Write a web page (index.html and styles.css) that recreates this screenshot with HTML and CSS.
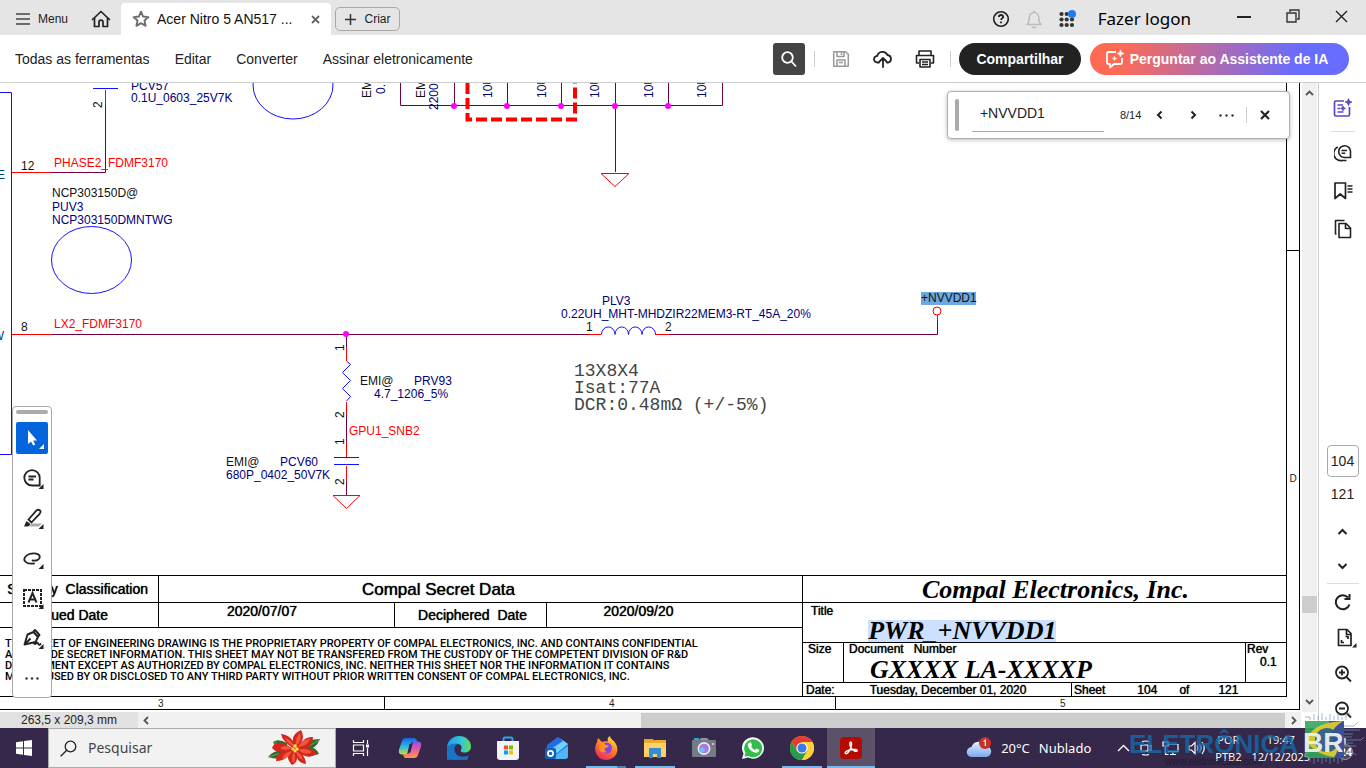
FILE: index.html
```html
<!DOCTYPE html>
<html lang="pt-BR">
<head>
<meta charset="utf-8">
<meta name="viewport" content="width=device-width, initial-scale=1">
<title>Acer Nitro 5 AN517</title>
<link rel="stylesheet" href="styles.css">
</head>
<body>
<header class="titlebar">
  <button class="menu-btn"><svg width="14" height="12" viewBox="0 0 14 12"><path d="M0 1h14M0 6h14M0 11h14" stroke="#444" stroke-width="1.6"/></svg>Menu</button>
  <button class="home-btn" aria-label="Início"><svg width="20" height="18" viewBox="0 0 20 18" fill="none" stroke="#222" stroke-width="1.7" stroke-linejoin="round" stroke-linecap="round"><path d="M1.500 9.500 10 1.500l8.500 8"/><path d="M3.500 8v8.500H8V12q0-1.800 2-1.800t2 1.800v4.500h4.500V8"/></svg></button>
  <div class="tab">
    <svg width="18" height="18" viewBox="0 0 16 16" fill="none" stroke="#6e6e6e" stroke-width="1.700" stroke-linejoin="round"><path d="m8 1.500 1.900 4.300 4.700.5-3.500 3.100 1 4.700L8 11.700l-4.100 2.400 1-4.700L1.400 6.300l4.700-.5z"/></svg>
    <span class="tab-name">Acer Nitro 5 AN517 ...</span>
    <button class="tab-close" aria-label="Fechar guia"><svg width="9" height="9" viewBox="0 0 9 9"><path d="m1 1 7 7M8 1 1 8" stroke="#666" stroke-width="1.8"/></svg></button>
  </div>
  <button class="create-btn"><svg width="11" height="11" viewBox="0 0 11 11"><path d="M5.500 0v11M0 5.500h11" stroke="#333" stroke-width="1.500"/></svg>Criar</button>
  <div class="title-right">
    <button aria-label="Ajuda"><svg width="18" height="18" viewBox="0 0 18 18" fill="none" stroke="#222"><circle cx="9" cy="9" r="7.300" stroke-width="1.600"/><path d="M6.800 7q.2-2 2.200-2t2.200 1.800c0 1.500-2.100 1.600-2.100 3.200M9 11.500v1.800" stroke-width="1.800"/></svg></button>
    <button aria-label="Notificações"><svg width="18" height="20" viewBox="0 0 18 20" fill="none" stroke="#bbb" stroke-width="1.500" stroke-linejoin="round"><path d="M2 15.500c1.800-1.500 2.200-3.200 2.200-6.500 0-3 1.800-5.500 4.800-5.500s4.800 2.500 4.800 5.500c0 3.300.4 5 2.200 6.500zM9 3V1.500M7 17.500c.5 1.500 3.500 1.500 4 0"/></svg></button>
    <button aria-label="Aplicativos"><svg width="18" height="18" viewBox="0 0 18 18" fill="#333"><circle cx="3.500" cy="4" r="2.100"/><circle cx="8.700" cy="4" r="2.100"/><circle cx="3.500" cy="9.500" r="2.100"/><circle cx="8.700" cy="9.500" r="2.100"/><circle cx="14" cy="9.500" r="2.100"/><circle cx="3.500" cy="15" r="2.100"/><circle cx="8.700" cy="15" r="2.100"/><circle cx="14" cy="15" r="2.100"/><circle cx="14" cy="4" r="4" fill="#1c7df0"/></svg></button>
  </div>
  <button class="login">Fazer logon</button>
  <div class="window-controls">
    <button aria-label="Minimizar"><svg width="16" height="16" viewBox="0 0 16 16"><path d="M1 9h14" stroke="#222" stroke-width="2"/></svg></button>
    <button aria-label="Restaurar"><svg width="14" height="14" viewBox="0 0 14 14" fill="none" stroke="#333" stroke-width="1.400"><path d="M1 4h9v9H1zM4 3V1h9v9h-2"/></svg></button>
    <button aria-label="Fechar"><svg width="13" height="13" viewBox="0 0 13 13"><path d="m1 1 11 11M12 1 1 12" stroke="#222" stroke-width="1.400"/></svg></button>
  </div>
</header>

<nav class="toolbar">
  <div class="tool-menus">
    <button>Todas as ferramentas</button><button>Editar</button><button>Converter</button><button>Assinar eletronicamente</button>
  </div>
  <button class="find-btn" aria-label="Localizar"><svg width="18" height="18" viewBox="0 0 18 18" fill="none" stroke="#fff" stroke-width="1.800"><circle cx="7.500" cy="7.500" r="5.300"/><path d="m11.500 11.500 4.500 5"/></svg></button>
  <i class="divider"></i>
  <div class="tool-icons">
    <button aria-label="Salvar"><svg width="18" height="18" viewBox="0 0 18 18" fill="none" stroke="#999" stroke-width="1.500" stroke-linejoin="round"><path d="M1.700 1.700h12l2.600 2.600v12H1.700zM5 2v4.500h7V2M9.500 2v3M5 16v-6h8v6M7 12.500h4"/></svg></button>
    <button aria-label="Enviar"><svg width="20" height="18" viewBox="0 0 20 18" fill="none" stroke="#222" stroke-width="1.800" stroke-linecap="round" stroke-linejoin="round"><path d="M6 12.500H4.500a3.300 3.300 0 0 1-.3-6.600A5.500 5.500 0 0 1 14.500 5a3.900 3.900 0 0 1 1 7.500H14M10 17V8.500M6.500 11.500 10 8l3.500 3.500"/></svg></button>
    <button aria-label="Imprimir"><svg width="20" height="18" viewBox="0 0 20 18" fill="none" stroke="#222" stroke-width="1.600" stroke-linejoin="round"><path d="M4 5V1h12v4M4 13H1.500V5.500h17V13H16M5 9.500h10V17H5zM7 12h6M7 14.500h6"/></svg></button>
  </div>
  <i class="divider"></i>
  <button class="share-btn">Compartilhar</button>
  <button class="ai-btn"><svg width="20" height="20" viewBox="0 0 20 20" fill="none" stroke="#fff" stroke-width="1.800" stroke-linejoin="round"><path d="M11 3H3.500Q2 3 2 4.500v9Q2 15 3.500 15H5v3.500L9 15h6.500q1.500 0 1.500-1.500V9"/><path d="m15.500 1 .9 2.500L19 4.500l-2.600 1-.9 2.500-1-2.500-2.500-1 2.500-1zM9.500 7.500l.6 1.400 1.400.6-1.400.6-.6 1.400-.6-1.400-1.400-.6 1.400-.6z" fill="#fff" stroke-width=".6"/></svg>Perguntar ao Assistente de IA</button>
</nav>

<main class="workspace">
  <div class="viewer">
    <div class="viewport">
      <section class="document">
        <div class="sheet">
          <svg class="schematic" role="img" aria-label="Esquema elétrico">
            <g transform="translate(0 -83)">
              <g class="blue">
                <path d="M0 92.500h11.500v362H0M93 88.500h25M334 457.500h25M334 464.500h25"/>
                <ellipse cx="91.500" cy="260" rx="40" ry="33.500"/>
                <ellipse cx="293" cy="85" rx="40" ry="34"/>
                <path d="m346.500 361 4 3.500-8 8 8 8-8 8 8 8-4 4.500M601.500 334.500a6.700 7.500 0 0 1 13.500 0a6.700 7.500 0 0 1 13.500 0a6.700 7.500 0 0 1 13.500 0a6.700 7.500 0 0 1 13.500 0"/>
              </g>
              <path class="wire" d="M52 172.500h53.500V106M400.500 83v22.500h322V83M454.500 83v22M507.500 83v22M561.500 83v22M615.500 83v89M668.500 83v22M52 334.500h536M669 334.500h268.500V320M346.500 334v13M346.500 415v26M346.500 482v13"/>
              <path class="pin" d="M12 172.500h40M105.500 90v16M12 334.500h40M588 334.500h13M655 334.500h14M937.500 315v5M346.500 347v14M346.500 402v13M346.500 441v16M346.500 466v16M601 173.500h28l-14 13zM333 495.500h27l-13.500 13z"/>
              <circle class="pin" cx="937" cy="311" r="4"/>
              <path class="zone" d="M467.500 83v36.500h107.500V83"/>
              <g fill="#f0f"><circle cx="454" cy="106" r="3"/><circle cx="507" cy="106" r="3"/><circle cx="561" cy="106" r="3"/><circle cx="615" cy="106" r="3"/><circle cx="668" cy="106" r="3"/><circle cx="346" cy="334" r="3"/></g>
              <rect x="921" y="292" width="55" height="13" fill="#70a8dc"/>
              <g class="label part">
                <text x="131" y="90">PCV57</text><text x="131" y="102">0.1U_0603_25V7K</text>
                <text x="52" y="211">PUV3</text><text x="52" y="224">NCP303150DMNTWG</text>
                <text x="602" y="305">PLV3</text><text x="561" y="318">0.22UH_MHT-MHDZIR22MEM3-RT_45A_20%</text>
                <text x="414" y="385">PRV93</text><text x="374" y="398">4.7_1206_5%</text>
                <text x="280" y="466">PCV60</text><text x="226" y="479">680P_0402_50V7K</text>
                <text transform="translate(385 94) rotate(-90)">0.</text>
                <text transform="translate(438 110) rotate(-90)">2200</text>
                <text transform="translate(492 98) rotate(-90)">10U</text>
                <text transform="translate(546 98) rotate(-90)">10U</text>
                <text transform="translate(599 98) rotate(-90)">10U</text>
                <text transform="translate(653 98) rotate(-90)">10U</text>
                <text transform="translate(706 98) rotate(-90)">10U</text>
              </g>
              <g class="label">
                <text x="21" y="170">12</text><text x="21" y="331">8</text>
                <text x="52" y="197">NCP303150D@</text>
                <text x="586" y="331">1</text><text x="665" y="331">2</text>
                <text x="921" y="302">+NVVDD1</text>
                <text x="360" y="385">EMI@</text><text x="226" y="466">EMI@</text>
                <text transform="translate(371 98) rotate(-90)">EM</text>
                <text transform="translate(425 98) rotate(-90)">EM</text>
                <text transform="translate(102 108) rotate(-90)">2</text>
                <text transform="translate(344 351) rotate(-90)">1</text>
                <text transform="translate(344 418) rotate(-90)">2</text>
                <text transform="translate(344 445) rotate(-90)">1</text>
                <text transform="translate(344 485) rotate(-90)">2</text>
              </g>
              <g class="label net">
                <text x="54" y="167">PHASE2_FDMF3170</text><text x="54" y="328">LX2_FDMF3170</text><text x="349" y="435">GPU1_SNB2</text>
              </g>
              <g class="label port" text-anchor="end"><text x="5" y="179">E</text><text x="4" y="340">W</text></g>
              <g class="note"><text x="574" y="376">13X8X4</text><text x="574" y="393">Isat:77A</text><text x="574" y="410">DCR:0.48mΩ (+/-5%)</text></g>
            </g>
          </svg>

          <div class="title-block">
            <div class="tb-left">
              <div class="tb-row tb-head"><span class="c-label c-first">Security&nbsp; Classification</span><span class="c-secret">Compal Secret Data</span></div>
              <div class="tb-row tb-dates"><span class="c-label c-issued">Issued Date</span><span class="c-date1">2020/07/07</span><span class="c-dec">Deciphered&nbsp; Date</span><span class="c-date2">2020/09/20</span></div>
              <p class="legal">THIS SHEET OF ENGINEERING DRAWING IS THE PROPRIETARY PROPERTY OF COMPAL ELECTRONICS, INC. AND CONTAINS CONFIDENTIAL<br>AND TRADE SECRET INFORMATION. THIS SHEET MAY NOT BE TRANSFERED FROM THE CUSTODY OF THE COMPETENT DIVISION OF R&amp;D<br>DEPARTMENT EXCEPT AS AUTHORIZED BY COMPAL ELECTRONICS, INC. NEITHER THIS SHEET NOR THE INFORMATION IT CONTAINS<br>MAY BE USED BY OR DISCLOSED TO ANY THIRD PARTY WITHOUT PRIOR WRITTEN CONSENT OF COMPAL ELECTRONICS, INC.</p>
            </div>
            <div class="tb-right">
              <div class="company">Compal Electronics, Inc.</div>
              <div class="doc-title"><span>Title</span><mark>PWR_+NVVDD1</mark></div>
              <div class="doc-ids">
                <span class="c-size">Size</span>
                <div class="c-number"><span>Document&nbsp;&nbsp; Number</span><b>GXXXX LA-XXXXP</b></div>
                <div class="c-rev"><span>Rev</span><span>0.1</span></div>
              </div>
              <div class="doc-date"><span>Date:</span><span>Tuesday, December 01, 2020</span><div class="c-sheet"><span>Sheet</span><span>104</span><span>of</span><span>121</span></div></div>
            </div>
          </div>
        </div>
        <div class="sheet-margin"><span>D</span></div>
        <div class="ruler"><span>3</span><span>4</span><span>5</span></div>
      </section>
      <div class="v-scroll">
        <svg width="9" height="6" viewBox="0 0 9 6"><path d="m1 5 3.500-3.500L8 5" fill="none" stroke="#555" stroke-width="1.800"/></svg>
        <i></i>
        <svg width="9" height="6" viewBox="0 0 9 6"><path d="m1 1 3.500 3.500L8 1" fill="none" stroke="#555" stroke-width="1.800"/></svg>
      </div>
    </div>
    <div class="status">
      <span class="page-size">263,5 x 209,3 mm</span>
      <div class="h-scroll">
        <svg width="6" height="9" viewBox="0 0 6 9"><path d="M5 1 1.500 4.500 5 8" fill="none" stroke="#555" stroke-width="1.800"/></svg>
        <i></i>
        <svg width="6" height="9" viewBox="0 0 6 9"><path d="m1 1 3.500 3.500L1 8" fill="none" stroke="#555" stroke-width="1.800"/></svg>
      </div>
    </div>

    <form class="find-box">
      <i class="grip"></i>
      <input type="text" value="+NVVDD1" aria-label="Localizar texto">
      <output>8/14</output>
      <button type="button" aria-label="Anterior"><svg width="7" height="10" viewBox="0 0 7 10"><path d="M5.500 1.500 2 5l3.500 3.500" fill="none" stroke="#222" stroke-width="2"/></svg></button>
      <button type="button" aria-label="Próximo"><svg width="7" height="10" viewBox="0 0 7 10"><path d="M1.500 1.500 5 5 1.500 8.500" fill="none" stroke="#222" stroke-width="2"/></svg></button>
      <button type="button" aria-label="Mais opções"><svg width="15" height="3" viewBox="0 0 15 3" fill="#333"><circle cx="1.500" cy="1.500" r="1.200"/><circle cx="7.500" cy="1.500" r="1.200"/><circle cx="13.500" cy="1.500" r="1.200"/></svg></button>
      <i class="divider"></i>
      <button type="button" aria-label="Fechar"><svg width="10" height="10" viewBox="0 0 10 10"><path d="m1 1 8 8M9 1 1 9" stroke="#222" stroke-width="2.200"/></svg></button>
    </form>

    <div class="palette">
      <i></i>
      <button class="active" aria-label="Selecionar"><svg viewBox="0 0 32 32"><path d="M12 8v14l3-2.500 2.200 4 2-1-2-4H21z" fill="#fff"/><path d="M28 22v5h-5z" fill="#fff"/></svg></button>
      <button aria-label="Comentar"><svg viewBox="0 0 32 32"><path d="M23.700 23.500H16a7.700 7.700 0 1 1 7.700-7.700zM12.500 14.500h7.500M12.500 17.500h5" fill="none" stroke="#222" stroke-width="1.800"/><path d="M27.500 22v5h-5z" fill="#222"/></svg></button>
      <button aria-label="Realçar"><svg viewBox="0 0 32 32"><path d="M16 21.500h10l-3 3H13z" fill="#aaa"/><path d="m12.500 17.500 8-9q1.800-1.500 3.300-.2t-.2 3.500l-8.200 8.700z" fill="#fff" stroke="#222" stroke-width="1.800"/><path d="m10.500 19 4 3q-1 3-6.500 2.500z" fill="#222"/><path d="M27.500 22v5h-5z" fill="#222"/></svg></button>
      <button aria-label="Desenhar"><svg viewBox="0 0 32 32"><path d="M16.500 18.500c3.500.7 7-.5 7.300-3.300.3-3.700-6-4.700-10.300-3.200s-6.500 5-4.300 7.500c1.800 2 5.300 2.500 8.800 2" fill="none" stroke="#222" stroke-width="1.800" stroke-linecap="round"/><path d="M27.500 22v5h-5z" fill="#222"/></svg></button>
      <button aria-label="Adicionar texto"><svg viewBox="0 0 32 32"><path d="M8 8h17v16H8z" fill="none" stroke="#222" stroke-width="2" stroke-dasharray="3 1"/><path d="m12.500 20.500 4-9.500 4 9.500M14 17.500h5" fill="none" stroke="#222" stroke-width="2"/><path d="M27.500 22v5h-5z" fill="#222"/></svg></button>
      <button aria-label="Assinar"><svg viewBox="0 0 32 32"><path d="m8.500 22.500 3-10 6-2.500 4.500 5-2.500 5zM9 22l5.500-5.500M17 10l2-2 4.500 5-1.800 2M18 21c1.500 3 3-2 4 .5s2 1 3 0" fill="none" stroke="#222" stroke-width="1.900" stroke-linejoin="round"/><path d="M27.500 22v5h-5z" fill="#222"/></svg></button>
      <button aria-label="Mais ferramentas"><svg viewBox="0 0 32 32" fill="#333"><circle cx="10.500" cy="16.500" r="1.200"/><circle cx="16" cy="16.500" r="1.200"/><circle cx="21.500" cy="16.500" r="1.200"/></svg></button>
    </div>
  </div>

  <aside class="rail">
    <div class="rail-top">
      <button aria-label="Assistente de IA"><svg width="20" height="20" viewBox="0 0 20 20" fill="none" stroke="#5a47c8" stroke-width="1.700"><path d="M11 3H3q-1.500 0-1.500 1.500v12Q1.500 18 3 18h12q1.500 0 1.500-1.500V9M4.500 7H10M4.500 10.500H7M4.500 14h6"/><path d="m15.500.5 1 2.600 2.500 1-2.500 1-1 2.600-1-2.600-2.500-1 2.500-1zM10 8l.8 1.600 1.700.8-1.700.8L10 12.800l-.8-1.600-1.700-.8 1.700-.8z" fill="#5a47c8" stroke-width=".8"/></svg></button>
      <hr>
      <button aria-label="Comentários"><svg width="18" height="18" viewBox="0 0 18 18" fill="none" stroke="#222" stroke-width="1.600"><path d="M16.500 13.500h-6a5.900 5.900 0 1 1 6-6zM7.500 6.500H13M7.500 9.200h3.800M3.800 3A7.200 7.200 0 0 0 8.500 16.500h4"/></svg></button>
      <button aria-label="Marcadores"><svg width="20" height="20" viewBox="0 0 20 20" fill="none" stroke="#222" stroke-width="1.700" stroke-linejoin="round"><path d="M2 2h10.500v15.500L7.200 13 2 17.500zM14.500 5h5M14.500 8h5M14.500 11h5"/></svg></button>
      <button aria-label="Páginas"><svg width="18" height="20" viewBox="0 0 18 20" fill="none" stroke="#222" stroke-width="1.600" stroke-linejoin="round"><path d="M5 4.500h7l4.500 4.500v9.500H5zM11.500 5v4.500h5M2.500 15H1.500V1.500h9"/></svg></button>
    </div>
    <div class="rail-bottom">
      <input type="text" value="104" aria-label="Página atual">
      <span class="total">121</span>
      <button class="step" aria-label="Página anterior"><svg width="11" height="8" viewBox="0 0 11 8"><path d="m1.500 6 4-4 4 4" fill="none" stroke="#222" stroke-width="2"/></svg></button>
      <button class="step" aria-label="Próxima página"><svg width="11" height="8" viewBox="0 0 11 8"><path d="m1.500 2 4 4 4-4" fill="none" stroke="#222" stroke-width="2"/></svg></button>
      <hr>
      <button aria-label="Girar"><svg width="18" height="18" viewBox="0 0 18 18" fill="none" stroke="#222" stroke-width="2"><path d="M15.500 11.500A7 7 0 1 1 14 4.500M15.500 1v5h-5"/></svg></button>
      <button class="fit" aria-label="Ajustar página"><svg width="24" height="20" viewBox="0 0 24 20" fill="none" stroke="#222" stroke-width="1.700" stroke-linejoin="round"><path d="M5.500 1.500H14l4 4v12H5.500zM13.500 2v4.500H18M12.500 8.500H15V11M11 14.500H8.500V12"/><path d="M23.500 15v4.500H19z" fill="#222" stroke="none"/></svg></button>
      <button aria-label="Ampliar"><svg width="18" height="18" viewBox="0 0 18 18" fill="none" stroke="#222" stroke-width="1.800"><circle cx="8" cy="7.500" r="6"/><path d="m12.500 12 4.500 4.500M8 4.500v6M5 7.500h6"/></svg></button>
      <button aria-label="Reduzir"><svg width="18" height="18" viewBox="0 0 18 18" fill="none" stroke="#222" stroke-width="1.800"><circle cx="8" cy="7.500" r="6"/><path d="m12.500 12 4.500 4.500M5 7.500h6"/></svg></button>
    </div>
  </aside>
</main>

<footer class="taskbar">
  <button class="start" aria-label="Iniciar"><svg width="16" height="16" viewBox="0 0 16 16" fill="#fff"><path d="M0 2.200 7 1.200v6.300H0zM8 1l8-1v7.500H8zM0 8.500h7v6.300l-7-1zM8 8.500h8V16l-8-1.100z"/></svg></button>
  <label class="search"><svg width="17" height="17" viewBox="0 0 17 17" fill="none" stroke="#222" stroke-width="1.300"><circle cx="10.500" cy="6.500" r="5.300"/><path d="m6.700 10.300-6 6"/></svg>
    <input type="text" placeholder="Pesquisar" aria-label="Pesquisar">
    <svg width="54" height="36" viewBox="0 0 54 36">
      <path d="M22 21Q8 18 1 27q10 4 20-3zM20 13Q11 8 6 12q3 8 15 8zM34 20q14 2 19-11-13 0-20 8zM37 21q6 6 15 3-3-8-13-7z" fill="#356a31"/>
      <path d="M21 23Q10 23 2 27M34 19q10-3 18-9M20 16q-8-1-13-4" fill="none" stroke="#80a861" stroke-width=".8"/>
      <path d="M27 19Q15 11 14 4q8 1 12 7Q25 4 34 0q4 7 0 13 5-7 12-6 0 8-7 11 8 0 11 6-8 5-14 1 3 5 3 9-7-1-9-6 0 5-5 7-5-5-4-9-4 5-12 5 0-7 7-10-7 2-11-3 3-8 12-4z" fill="#d3261d"/>
      <path d="M27 17q-7-4-9-9 7 2 9 9zM29 16q-1-9 4-13 3 7-4 13zM31 17q5-8 12-8-2 7-12 8zM31 20q8-3 14 2-6 4-14-2zM29 21q6 3 7 9-6-2-7-9zM27 22q2 6 0 11-4-4 0-11zM25 21q-3 7-10 8 2-7 10-8zM25 18q-7-4-12 0 5 4 12 0z" fill="#f2563b"/>
      <g fill="#ffe24a"><circle cx="28" cy="16" r="1.800"/><circle cx="26" cy="19" r="1.600"/><circle cx="30" cy="19" r="1.800"/><circle cx="28" cy="21" r="1.500"/></g>
    </svg>
  </label>
  <div class="apps">
    <button aria-label="Visão de tarefas"><svg width="18" height="16" viewBox="0 0 18 16" fill="none" stroke="#fff" stroke-width="1.200"><path d="M1.500 0v2.500h10V0M1.500 5h10v6h-10zM1.500 16v-2.500h10V16M15.500 0v4M15.500 8v8"/><path d="M14 4.500h3v3h-3z" fill="#fff" stroke="none"/></svg></button>
    <button aria-label="Copilot"><svg width="24" height="24" viewBox="0 0 24 24"><defs><linearGradient id="cpA" x2="0" y2="1"><stop stop-color="#1b63e8"/><stop offset=".5" stop-color="#27b6e4"/><stop offset="1" stop-color="#c5df3a"/></linearGradient><linearGradient id="cpB" x2="0" y2="1"><stop stop-color="#8653e6"/><stop offset=".5" stop-color="#ea5aa0"/><stop offset="1" stop-color="#ff9a45"/></linearGradient></defs><path d="M8 2h8q2 0 2.600 2l.6 2H15q-2 0-2.600 2L10 16q-.6 2.500-3 2.500H4q-4 0-3-5L4 5q.8-3 4-3z" fill="url(#cpA)"/><path d="M16 22H8q-2 0-2.600-2l-.4-2h4q2 0 2.600-2L14 8q.6-2.500 3-2.500h3q4 0 3 5L20 19q-.8 3-4 3z" fill="url(#cpB)"/><path d="M11.500 8h3l-2 8.500h-3z" fill="#35204f"/></svg></button>
    <button aria-label="Edge"><svg width="24" height="24" viewBox="0 0 24 24"><defs><linearGradient id="edA"><stop stop-color="#1a9be6"/><stop offset=".6" stop-color="#34c6dc"/><stop offset="1" stop-color="#64dc55"/></linearGradient><linearGradient id="edB" x2="0" y2="1"><stop stop-color="#1ba0dc"/><stop offset="1" stop-color="#1457ad"/></linearGradient></defs><path d="M0 11C1 4 6 0 12 0c7 0 12 5 12 10.500 0 4-3 6-6.500 6-3 0-4.500-1.200-3.500-2.700 2-3-.5-6-4.500-6C5 7.800 1.500 9 0 11z" fill="url(#edA)"/><path d="M0 11c2-3 7-4 10-2.500-3 1.500-3.500 5-2 8 2.500 4.800 8.500 5 13.500 3A12 12 0 1 1 0 11z" fill="url(#edB)"/><path d="M8 16.500C6 12 8 9 10.500 8.500 6 7 1 9 0 12c0 7 5 12 12 12-2-1-3.500-4-4-7.500z" fill="#1675c8"/></svg></button>
    <button aria-label="Microsoft Store"><svg width="24" height="24" viewBox="0 0 24 24"><path d="M7.500 6V3q0-1.500 1.500-1.500h6q1.500 0 1.500 1.500v3" fill="none" stroke="#2aa5e5" stroke-width="2"/><path d="M1 5h22v16q0 3-3 3H4q-3 0-3-3z" fill="#f3f3f5"/><path d="M8 9.500h4v4H8z" fill="#f25022"/><path d="M13 9.500h4v4h-4z" fill="#7fba00"/><path d="M8 14.500h4v4H8z" fill="#00a4ef"/><path d="M13 14.500h4v4h-4z" fill="#ffb900"/></svg></button>
    <button aria-label="Outlook"><svg width="24" height="24" viewBox="0 0 24 24"><path d="m2 9 11-8 10 7v12q0 3-3 3H5q-3 0-3-3z" fill="#1680df"/><path d="m4 12 12-9 7 5-11 9z" fill="#70d0ff"/><path d="m2 10 11-9 5 4L6 13z" fill="#236be0"/><path d="m23 10-18 13h15q3 0 3-3z" fill="#52b5fa"/><rect y="12" width="11" height="11" rx="2" fill="#0f62bb"/><circle cx="5.500" cy="17.500" r="2.600" fill="none" stroke="#fff" stroke-width="1.700"/></svg></button>
    <button class="open multi" aria-label="Firefox"><svg width="24" height="24" viewBox="0 0 24 24"><defs><linearGradient id="ffA" x1=".8" x2=".3" y2="1"><stop stop-color="#ffe746"/><stop offset=".5" stop-color="#ff7b26"/><stop offset="1" stop-color="#ed2565"/></linearGradient></defs><path d="M3 6l1-4 4 4c2-1 4-1 6-.5C13 3 14 1 16 0c0 3 4 4 6 8 4 8-1 16-10 16C4 24-2 15 3 6z" fill="url(#ffA)"/><circle cx="12.500" cy="12" r="5.500" fill="#8546db"/><path d="M5 7q5-1 7 2l3 .5q-1 2.500-4 2.500-1 3 2 4-6 2-8-3z" fill="#ff9127"/></svg></button>
    <button class="open" aria-label="Explorador"><svg width="24" height="22" viewBox="0 0 24 22"><path d="M1 2h9l2 3H1z" fill="#e9a41d"/><path d="M1 4h22v16H1z" fill="#ffd163"/><path d="M1 4h9l2-1h11v3H1z" fill="#e8ad31"/><path d="M6 12q0-1 1-1h10q1 0 1 1v9h-4v-4h-4v4H6z" fill="#2f8dda"/></svg></button>
    <button aria-label="Câmera"><svg width="26" height="20" viewBox="0 0 26 20"><path d="M3 0h5v3H3z" fill="#29a7dc"/><rect x="1" y="2" width="24" height="17" rx="1" fill="#747b83"/><path d="M8 2 10 0h6l2 2z" fill="#8e969d"/><circle cx="13" cy="10.500" r="6.500" fill="#e9eaf0"/><circle cx="13" cy="10.500" r="4.800" fill="#a87be4"/><circle cx="11" cy="12" r="2.800" fill="#77bafa"/><path d="M21 5h2v2h-2z" fill="#c5c8cb"/></svg></button>
    <button aria-label="WhatsApp"><svg width="22" height="22" viewBox="0 0 22 22"><path d="M0 22 1.500 16.400A11 10.700 0 1 1 6 20.500z" fill="#f4fff6"/><path d="m2.500 19.500 1-3.500a9 9 0 1 1 3 3z" fill="#32bd4d"/><path d="M7.500 5.500q1-.8 1.600.2l1 2.300-1 1.600q1.500 2.500 4 3.500l1.500-1.600 2.500 1.300c.5 1.800-1.500 3.200-3.500 3-4-.7-7.300-4-7.800-7.500-.1-1.500.8-2.200 1.700-2.800z" fill="#fff"/></svg></button>
    <button class="open" aria-label="Chrome"><svg width="24" height="24" viewBox="0 0 24 24"><circle cx="12" cy="12" r="12" fill="#ffd13c"/><path d="M1.600 6A12 12 0 0 1 22.400 6H12L7 15z" fill="#e63c30"/><path d="M1.600 6A12 12 0 0 0 12 24l5.200-9-10.400 0z" fill="#279c49"/><path d="M22.400 6H12v6l5.200 3L12 24A12 12 0 0 0 22.400 6z" fill="#ffd13c"/><circle cx="12" cy="12" r="5.600" fill="#fff"/><circle cx="12" cy="12" r="4.500" fill="#367be9"/></svg></button>
    <button class="open current" aria-label="Acrobat"><svg width="22" height="22" viewBox="0 0 22 22"><rect width="22" height="22" rx="4" fill="#b30b00"/><path d="M5.500 16.500c-1.500-1.300 2-3.300 5-3.800 3.500-.7 7.500-.3 6.500 1.300-1 1.300-5-1-6.300-3.800-1.200-2.200-1.200-5.300 0-5.300s1.200 3 0 6c-1.400 3.500-3.500 6.600-5.200 5.600z" fill="none" stroke="#fff" stroke-width="1.400"/></svg></button>
  </div>
  <div class="tray">
    <button class="weather"><svg width="26" height="22" viewBox="0 0 26 22"><defs><linearGradient id="cloud" x2="0" y2="1"><stop stop-color="#e6f1ff"/><stop offset="1" stop-color="#78a9ee"/></linearGradient></defs><path d="M6 20a5 5 0 0 1-.5-10 7.500 7.500 0 0 1 14-1A5.500 5.500 0 0 1 20 20z" fill="url(#cloud)"/><circle cx="19" cy="6" r="6" fill="#c83226"/><path d="m17.500 4.500 1.800-1.300V9" fill="none" stroke="#fff" stroke-width="1.100"/></svg><span>20°C</span><span>Nublado</span></button>
    <div class="tray-icons">
      <svg width="13" height="8" viewBox="0 0 13 8"><path d="m1 7 5.500-5.500L12 7" fill="none" stroke="#fff" stroke-width="1.400"/></svg>
      <svg width="14" height="16" viewBox="0 0 14 16" fill="none" stroke="#fff" stroke-width="1.200"><path d="M3 1.500q4-1 7 0M2 5h7v6H2zM9 7l3-1.500v5L9 9M3 14.500q4 1 7 0"/></svg>
      <svg width="17" height="16" viewBox="0 0 17 16" fill="none" stroke="#fff" stroke-width="1.200"><path d="M6 4.500h10v7H6M11 12v3M8 14.500h6M1 2h5v4H1zM3.500 6v8.500h3"/></svg>
      <svg width="17" height="14" viewBox="0 0 17 14" fill="none" stroke="#fff" stroke-width="1.200"><path d="M1 5h2.500L7 1.500v11L3.500 9H1zM9 4.500q1.800 2.500 0 5M11.500 3q3 4 0 8M14 1q4.500 6 0 12"/></svg>
    </div>
    <div class="stack lang"><span>POR</span><span>PTB2</span></div>
    <div class="stack clock"><time>19:47</time><time>12/12/2025</time></div>
    <button class="notify" aria-label="Notificações"><svg width="26" height="26" viewBox="0 0 26 26"><path d="M2 4h15v12H8l-3 3v-3H2z" fill="none" stroke="#fff" stroke-width="1.400"/><circle cx="17" cy="17" r="7.500" fill="#4c4a61" stroke="#999"/></svg><b>24</b></button>
  </div>
</footer>

<div class="watermark" aria-hidden="true">
  <div class="wm-text"><strong>ELETRÔNICA</strong><small>www.eletronicabr.com</small></div>
  <div class="wm-logo">
    <svg width="68" height="56" viewBox="0 0 68 56">
      <g fill="none" stroke="#6d9ecb" opacity=".7"><path d="M12 8V5H7M16 8V2M20 8V4M24 8V1M28 8V5M32 8V2M36 8V4M40 8V1M44 8V5M48 8V2l4-1M46 14h10l4-4M46 18h16M46 22h9M46 28h17l3-3M46 34h12M46 40h8l4 3M46 25h8M46 31h9M12 46v4M16 46v6M20 46v4M24 46v6M28 46v4M32 46v6M36 46v4M40 46v6M44 46v4"/></g>
      <path d="M7 9h37l2 2v35H9l-2-2z" fill="#35a65a" opacity=".9"/>
      <path d="M31 9h15v37H36q6-10-6-18z" fill="#38489d" opacity=".9"/>
      <path d="M7 28Q16 12 36 10l9-1Q28 20 36 31q6 8 0 14-18-2-29-17z" fill="#d9ca31" opacity=".95"/>
      <circle cx="29" cy="28" r="12" fill="#28578c" opacity=".9"/>
    </svg>
    <b>BR</b>
  </div>
</div>
</body>
</html>
```

FILE: styles.css
```css
* { box-sizing: border-box; }
html, body { height: 100%; }
body {
  margin: 0;
  display: flex;
  flex-direction: column;
  overflow: hidden;
  position: relative;
  background: #fff;
  color: #222;
  font: 14px/16px "Liberation Sans", Arial, sans-serif;
}
button, input {
  font: inherit;
  color: inherit;
  border: 0;
  padding: 0;
  margin: 0;
  background: none;
}
button { display: flex; align-items: center; justify-content: center; white-space: nowrap; }
svg { display: block; flex: none; }

/* Title bar */
.titlebar { flex: none; display: flex; align-items: center; height: 35px; background: #e5e5e5; padding-top: 3px; }
.menu-btn { gap: 8px; padding-left: 16px; font-size: 12px; }
.home-btn { margin: 0 10px 0 23px; }
.tab {
  display: flex;
  align-items: center;
  align-self: stretch;
  width: 210px;
  padding: 0 11px;
  background: #fff;
  border-radius: 4px 4px 0 0;
  color: #111;
}
.tab-name { flex: 1; padding-left: 7px; white-space: nowrap; }
.create-btn {
  gap: 9px;
  width: 65px;
  height: 24px;
  margin-left: 4px;
  border: 1px solid #a8a8a8;
  border-radius: 5px;
  font-size: 12px;
}
.title-right { display: flex; gap: 15px; margin-left: auto; }
.title-right button { width: 18px; }
.login { margin: 0 28px 0 22px; font: 17px/20px "Noto Sans", sans-serif; color: #000; }
.window-controls { display: flex; padding-bottom: 6px; }
.window-controls button { width: 49px; }

/* Toolbar */
.toolbar { flex: none; display: flex; align-items: center; height: 48px; padding-right: 17px; border-bottom: 1px solid #ccc; }
.tool-menus { display: flex; gap: 25px; padding-left: 15px; margin-right: auto; }
.find-btn { width: 32px; height: 32px; background: #444; border-radius: 3px; }
.divider { flex: none; width: 1px; height: 16px; background: #ccc; }
.find-btn + .divider { margin: 0 12px 0 9px; }
.tool-icons { display: flex; gap: 14px; margin-right: 11px; }
.tool-icons button { width: 28px; height: 28px; }
.share-btn { width: 122px; height: 32px; margin: 0 9px 0 8px; border-radius: 16px; background: #222; color: #fff; font-weight: bold; }
.ai-btn {
  width: 259px;
  height: 32px;
  gap: 5px;
  padding-right: 6px;
  border-radius: 16px;
  background: linear-gradient(100deg, #ff6a55 12%, #686cff 80%);
  color: #fff;
  font-weight: bold;
}

/* Viewer */
.workspace { flex: 1; min-height: 0; display: flex; }
.viewer { flex: 1; min-width: 0; position: relative; display: flex; flex-direction: column; }
.viewport { flex: 1; min-height: 0; display: flex; gap: 2px; padding-right: 1px; }
.document {
  flex: 1;
  min-width: 0;
  display: grid;
  grid-template: minmax(0, 1fr) 13px / minmax(0, 1fr) 12px;
  border-right: 1px solid #000;
  margin-bottom: 2px;
  overflow: hidden;
}
.sheet { display: flex; flex-direction: column; min-height: 0; border-right: 1px solid #000; }
.schematic { flex: 1; width: 100%; min-height: 0; overflow: hidden; }
.sheet-margin { display: flex; flex-direction: column; align-items: center; font-size: 10px; padding-top: 167px; }
.sheet-margin::before { content: ""; width: 100%; height: 1px; background: #000; }
.sheet-margin span { padding-top: 220px; }
.ruler { grid-column: 1 / 3; display: grid; grid-template-columns: 384fr 451fr 464fr; border-bottom: 1px solid #000; font-size: 10px; line-height: 14px; }
.ruler span { padding-left: 224px; border-left: 1px solid #000; }
.ruler span:first-child { padding-left: 158px; border-left: 0; }

.schematic .blue, .wire, .pin, .zone { fill: none; stroke-width: 1px; }
.schematic .blue { stroke: #11f; }
.wire { stroke: #700040; }
.pin { stroke: #f00; }
.zone { stroke: #f00; stroke-width: 4px; stroke-dasharray: 11px 4px; }
.label { font-size: 12px; fill: #111; }
.part { fill: #000078; }
.net { fill: #f00; }
.port { fill: #004080; }
.note { font: 18px "Liberation Mono", monospace; fill: #444; }

/* Title block */
.title-block { flex: none; display: grid; grid-template-columns: 802fr 484fr; border-block: 1px solid #000; color: #000; text-shadow: 0 0 1px #000; height: 122px; white-space: nowrap; }
.tb-left { display: flex; flex-direction: column; min-width: 0; }
.tb-row { display: flex; border-bottom: 1px solid #000; }
.tb-head { height: 27px; line-height: 27px; }
.tb-dates { height: 25px; line-height: 25px; }
.c-label { width: 159px; border-right: 1px solid #000; }
.c-first { text-align: right; padding-right: 10px; }
.c-issued { text-align: right; padding-right: 50px; }
.c-secret { flex: 1; font-size: 17px; padding-right: 84px; text-align: center; }
.c-date1, .c-date2 { line-height: 16px; text-align: center; }
.c-date1 { width: 235px; padding-right: 29px; }
.c-dec { width: 153px; padding-left: 4px; text-align: center; border-inline: 1px solid #000; }
.c-date2 { flex: 1; padding-right: 72px; }
.legal { margin: 0; padding: 10px 0 0 5px; font: 500 11px/11px Roboto, sans-serif; text-shadow: none; }
.tb-right { display: flex; flex-direction: column; min-width: 0; border-left: 1px solid #000; font-size: 12px; }
.tb-right > div { border-bottom: 1px solid #000; }
.tb-right > .doc-date { border-bottom: 0; }
.company { height: 27px; padding-left: 22px; text-align: center; font: italic bold 26px/27px "Liberation Serif", serif; text-shadow: none; }
.doc-title { height: 40px; display: flex; padding-left: 8px; gap: 35px; }
.doc-title mark { align-self: flex-end; background: #cce0ff; color: #000; font: italic bold 26px/22px "Liberation Serif", serif; text-shadow: none; }
.doc-ids { height: 40px; display: flex; line-height: 13px; }
.c-size { width: 41px; padding-left: 5px; border-right: 1px solid #000; }
.c-number { flex: 1; padding-left: 5px; display: flex; flex-direction: column; }
.c-number b { padding-left: 21px; font: italic bold 26px/27px "Liberation Serif", serif; text-shadow: none; }
.c-rev { width: 41px; padding-left: 1px; border-left: 1px solid #000; display: flex; flex-direction: column; }
.c-rev span + span { padding-left: 13px; }
.doc-date { flex: 1; display: flex; line-height: 14px; padding-left: 3px; gap: 35px; }
.c-sheet { display: flex; gap: 22px; width: 215px; margin-left: auto; padding-left: 2px; border-left: 1px solid #000; }
.c-sheet span:first-child { padding-right: 10px; }
.c-sheet span:last-child { padding-left: 7px; }

/* Scroll bars */
.v-scroll { width: 15px; flex: none; background: #f0f0f0; display: flex; flex-direction: column; align-items: center; padding: 7px 0; }
.v-scroll i { width: 100%; height: 17px; margin: auto 0 86px; background: #cdcdcd; }
.status { flex: none; display: flex; height: 16px; margin-right: 17px; background: #f0f0f0; }
.page-size { width: 138px; text-align: center; font-size: 12px; background: #e1e1e1; }
.h-scroll { flex: 1; display: flex; align-items: center; padding: 0 4px 0 5px; }
.h-scroll i { flex: 643 1 0; height: 15px; margin-left: 492px; margin-right: 6px; background: #cdcdcd; }

/* Find box */
.find-box {
  position: absolute;
  top: 8px;
  right: 28px;
  width: 343px;
  height: 48px;
  display: flex;
  align-items: center;
  padding: 0 5px 0 7px;
  background: #fff;
  border: 1px solid #b0b0b0;
  border-radius: 4px;
  box-shadow: 0 1px 4px #0004;
}
.grip { width: 4px; height: 32px; border-radius: 2px; background: #aaa; }
.find-box input { width: 132px; height: 34px; margin-left: 13px; padding: 0 8px 3px; border-bottom: 1px solid #aaa; }
.find-box output { margin-left: 16px; font-size: 11px; }
.find-box button { width: 34px; height: 32px; }
.find-box output + button { width: 36px; }
.find-box button:last-child { width: 38px; }
.find-box .divider { margin-left: 2px; }

/* Floating tools */
.palette {
  position: absolute;
  left: 12px;
  bottom: 30px;
  width: 40px;
  display: flex;
  flex-direction: column;
  gap: 8px;
  padding: 3px;
  background: #fff;
  border: 1px solid #aaa;
  border-radius: 4px;
}
.palette i { height: 4px; border-radius: 2px; background: #aaa; }
.palette button { width: 32px; height: 32px; border-radius: 2px; }
.palette svg { width: 32px; height: 32px; }
.palette .active { background: #0265dc; }

/* Right rail */
.rail { width: 48px; flex: none; display: flex; flex-direction: column; justify-content: space-between; border-left: 1px solid #ccc; overflow: hidden; }
.rail > div { display: flex; flex-direction: column; align-items: center; }
.rail hr { width: 24px; height: 1px; margin: 0; border: 0; background: #ddd; }
.rail-top { padding-top: 10px; }
.rail-top button { height: 30px; margin-bottom: 8px; }
.rail-top hr { margin-bottom: 6px; }
.rail-bottom input { width: 32px; height: 32px; border: 1px solid #aaa; border-radius: 4px; text-align: center; }
.rail-bottom .total { padding: 9px 0 13px; }
.rail-bottom .step { width: 32px; height: 34px; }
.rail-bottom hr { width: 32px; }
.rail-bottom button { height: 36px; }
.rail-bottom .fit { padding-left: 4px; }

/* Taskbar */
.taskbar { flex: none; display: flex; height: 40px; background: #35284a; color: #fff; font: 13px/16px "Noto Sans", sans-serif; }
.start { width: 48px; }
.search { display: flex; align-items: center; width: 288px; padding: 0 14px 0 11px; border: 1px solid #aaa; background: #f2f2f2; }
.search input { flex: 1; min-width: 0; padding-left: 11px; font-size: 14px; }
.search input::placeholder { color: #444; opacity: 1; }
.apps { display: flex; gap: 1px; padding-left: 1px; }
.apps button { width: 48px; padding-bottom: 1px; }
.apps .open { background: linear-gradient(#76b9ed, #76b9ed) bottom / 40px 2px no-repeat; }
.apps .multi { background-image: linear-gradient(90deg, #76b9ed 31px, #5a7ea3 31px); }
.apps .current { background-color: #5d5069; background-size: 100% 2px; }
.tray { display: flex; align-items: center; margin-left: auto; padding-right: 12px; }
.weather { gap: 9px; }
.tray-icons { display: flex; align-items: center; gap: 9px; margin: 0 10px 0 26px; }
.stack { display: flex; flex-direction: column; align-items: center; font-size: 11px; line-height: 17px; }
.clock { margin-left: 10px; }
.notify { position: relative; margin-left: 18px; }
.notify b { position: absolute; right: 2px; bottom: 1px; font-size: 11px; }

/* Brand overlay */
.watermark { position: absolute; right: 0; bottom: 0; display: flex; align-items: flex-end; pointer-events: none; }
.wm-text { display: flex; flex-direction: column; align-items: center; color: #1769a8; opacity: .8; }
.wm-text strong { font-size: 26px; line-height: 24px; }
.wm-text small { font-size: 10px; line-height: 12px; color: #141020; opacity: .6; }
.wm-logo { position: relative; width: 68px; height: 56px; }
.wm-logo b { position: absolute; left: 5px; top: 17px; font-size: 28px; line-height: 28px; color: #eee; opacity: .95; }
```
